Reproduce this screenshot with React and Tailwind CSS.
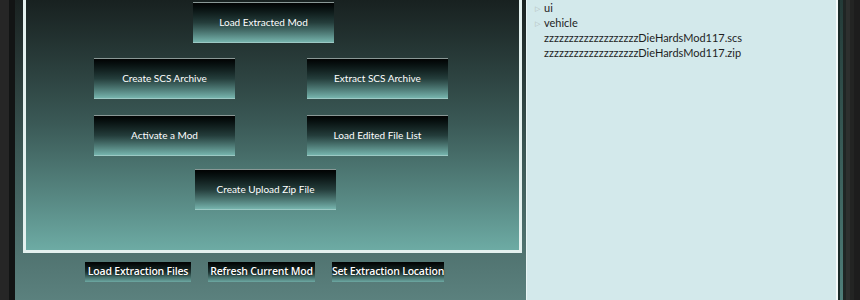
import React from 'react';

const BIG_BTN =
    'flex items-center justify-center w-[141px] h-[40px] border-t border-[#8a9896] bg-gradient-to-b from-[#020404] via-[#243d3b] to-[#76b4ad] text-white text-[10px] font-["Lato",sans-serif] shadow-[0_1px_0_#9cc9c4]';

const SMALL_BTN =
    'flex items-center justify-center whitespace-nowrap h-[20px] bg-gradient-to-b from-[#020303] via-[#1d3331] to-[#6da9a3] text-white text-[10.5px] font-semibold font-["Open_Sans",sans-serif] tracking-[-0.2px] [text-shadow:0_0_2px_#000]';

function BigButton({ label }) {
    return <div className={BIG_BTN}>{label}</div>;
}

function TreeRow({ label, arrow }) {
    return (
        <div className="flex items-center h-[15px]">
            <span className="w-[8px] text-[7px] text-[#b0b8b8] leading-none">{arrow ? '▷' : ''}</span>
            <span className="ml-[1px] text-[11px] text-[#1e1e1e] font-['Lato',sans-serif]">{label}</span>
        </div>
    );
}

export default function App() {
    return (
        <div className="flex w-[860px] h-[300px] overflow-hidden bg-[#1c1c1c]">
            {/* left frame edge */}
            <div className="w-[9px] bg-[#262626]" />
            <div className="w-[6px] bg-[#121414]" />

            {/* main area */}
            <div className="flex flex-col w-[511px] bg-gradient-to-b from-[#1a2221] via-[#3a5653] to-[#5b817e]">
                <div className="ml-[8px] mt-[-3px] w-[499px] h-[256px] border-[3px] border-[#e4f1ef] bg-gradient-to-b from-[#182120] via-[#3b5a57] to-[#6dabA4]">
                    <div className="flex flex-col pt-[2px]">
                        <div className="flex pl-[167px]">
                            <BigButton label="Load Extracted Mod" />
                        </div>
                        <div className="flex pl-[68px] gap-[72px] mt-[16px]">
                            <BigButton label="Create SCS Archive" />
                            <BigButton label="Extract SCS Archive" />
                        </div>
                        <div className="flex pl-[68px] gap-[72px] mt-[17px]">
                            <BigButton label="Activate a Mod" />
                            <BigButton label="Load Edited File List" />
                        </div>
                        <div className="flex pl-[169px] mt-[14px]">
                            <BigButton label="Create Upload Zip File" />
                        </div>
                    </div>
                </div>
                <div className="flex pl-[70px] mt-[9px] gap-[17px]">
                    <div className={`${SMALL_BTN} w-[106px]`}>Load Extraction Files</div>
                    <div className={`${SMALL_BTN} w-[107px]`}>Refresh Current Mod</div>
                    <div className={`${SMALL_BTN} w-[112px]`}>Set Extraction Location</div>
                </div>
            </div>

            {/* file tree panel */}
            <div className="w-[1px] bg-[#e9f5f5]" />
            <div className="w-[309px] bg-[#d3e9eb] pt-[1px] pl-[8px]">
                <TreeRow arrow label="ui" />
                <TreeRow arrow label="vehicle" />
                <TreeRow label="zzzzzzzzzzzzzzzzzzzDieHardsMod117.scs" />
                <TreeRow label="zzzzzzzzzzzzzzzzzzzDieHardsMod117.zip" />
            </div>
            <div className="w-[2px] bg-[#f4fafa]" />

            {/* right frame edge */}
            <div className="w-[2px] bg-[#1b2b29]" />
            <div className="w-[3px] bg-gradient-to-b from-[#233a37] to-[#4f7f7a]" />
            <div className="w-[3px] bg-[#1f2524]" />
            <div className="w-[4px] bg-[#2d2f2e]" />
            <div className="w-[4px] bg-[#232423]" />
            <div className="flex-1 bg-[#1d1d1d]" />
        </div>
    );
}
